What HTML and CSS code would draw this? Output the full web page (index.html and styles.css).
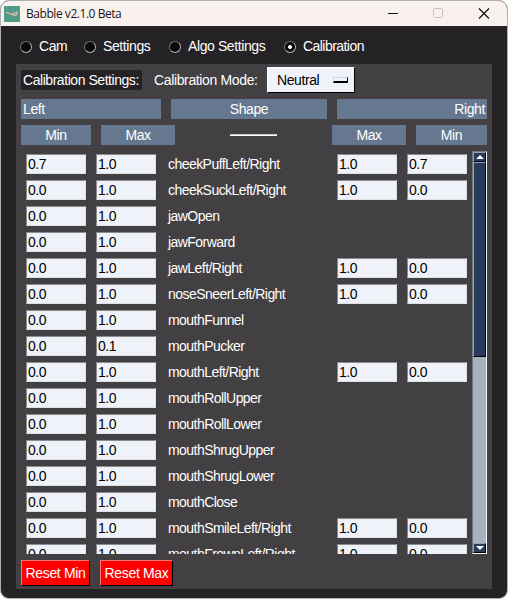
FILE: index.html
```
<!DOCTYPE html>
<html lang="en">
<head>
<meta charset="utf-8">
<title>Babble v2.1.0 Beta</title>
<link rel="stylesheet" href="styles.css">
</head>
<body>
<div class="window">
  <header class="titlebar">
    <svg class="logo" width="16" height="16" viewBox="0 0 16 16"><rect width="16" height="16" fill="#4f9d88"/><path d="M2 6.7Q4 6.3 5.5 7.5T9 7.6L13.2 6.5" fill="none" stroke="#e3b5a0" stroke-width="1.2"/><path d="M8 8.2Q10 9.8 12 9.2Q13.2 8.5 13 5.5" fill="none" stroke="#e8c0b3" stroke-width="1.1"/></svg>
    <span class="title">Babble v2.1.0 Beta</span>
    <svg class="controls" width="104" height="14" viewBox="0 0 104 14" fill="none"><path d="M0 6.5H10" stroke="#111"/><rect x="45.5" y="1.5" width="9" height="9" rx="1" stroke="#c8c1bf"/><path d="M91 1.5L101 11.5M101 1.5L91 11.5" stroke="#111" stroke-width="1.2"/></svg>
  </header>
  <nav class="tabs">
    <label class="tab cam"><i class="radio"></i><span>Cam</span></label>
    <label class="tab settings"><i class="radio"></i><span>Settings</span></label>
    <label class="tab algo"><i class="radio"></i><span>Algo Settings</span></label>
    <label class="tab current"><i class="radio on"></i><span>Calibration</span></label>
  </nav>
  <main class="panel">
    <div class="mode">
      <span class="caption">Calibration Settings:</span>
      <span class="mode-label">Calibration Mode:</span>
      <div class="select"><span>Neutral</span><i class="indicator"></i></div>
    </div>
    <div class="groups"><div class="head left">Left</div><div class="head">Shape</div><div class="head right">Right</div></div>
    <div class="columns"><div class="head shifted">Min</div><div class="head">Max</div><i class="rule"></i><div class="head">Max</div><div class="head">Min</div></div>
    <div class="viewport">
      <div class="rows" id="rows"></div>
      <div class="scrollbar">
        <div class="arrow"><svg width="8" height="4" viewBox="0 0 8 4"><path d="M0 4L4 0L8 4Z" fill="#fff"/></svg></div>
        <div class="thumb"></div>
        <div class="trough"></div>
        <div class="arrow"><svg width="8" height="4" viewBox="0 0 8 4"><path d="M0 0H8L4 4Z" fill="#fff"/></svg></div>
      </div>
    </div>
    <footer class="actions"><button class="reset min">Reset Min</button><button class="reset">Reset Max</button></footer>
  </main>
</div>
<script src="rows.js"></script>
</body>
</html>
```
FILE: styles.css
```
* { box-sizing: border-box; }
body { margin: 0; background: #fff; overflow: hidden; font: 14px/18px "Liberation Sans", Arial, sans-serif; color: #fff; }
i { display: block; flex: none; }
.window { width: 508px; height: 599px; border: 1px solid #b3aeae; border-radius: 9px; overflow: hidden; background: #242224; display: flex; flex-direction: column; }
.titlebar { height: 25px; flex: none; background: #f9f1ee; color: #1b1919; display: flex; align-items: center; padding: 0 18px 0 3px; }
.logo { flex: none; }
.title { margin-left: 6px; font: 12px/16px "Open Sans", "Noto Sans", sans-serif; letter-spacing: -.45px; white-space: nowrap; }
.controls { margin-left: auto; margin-right: -3px; }
.tabs { height: 38px; flex: none; display: flex; align-items: center; padding: 3px 0 0 19px; white-space: nowrap; letter-spacing: -.4px; }
.tab { display: flex; align-items: center; gap: 7px; }
.tab span { padding-bottom: 2px; }
.cam { width: 64px; }
.settings { width: 85px; }
.algo { width: 115px; }
.current { letter-spacing: -.55px; }
.radio { width: 12px; height: 12px; border-radius: 50%; border: 1px solid; border-color: #777 #b4b4b4 #b4b4b4 #777; background: #080808; }
.on { background: radial-gradient(circle, #fff 0 1.7px, #080808 2.2px); }
.panel { margin: 0 15px 0 15px; height: 525px; flex: none; background: #434043; padding: 3px 5px; }
.mode { height: 26px; display: flex; align-items: center; white-space: nowrap; letter-spacing: -.4px; }
.caption { width: 121px; height: 20px; line-height: 21px; padding-left: 2px; background: #242224; margin-right: 12px; letter-spacing: -.45px; }
.mode-label { width: 113px; letter-spacing: -.36px; }
.select { width: 88px; height: 26px; background: #eff3f9; color: #000; border: 1px solid; border-color: #f8fbff #000 #000 #f8fbff; display: flex; align-items: center; justify-content: space-between; padding: 0 6px 0 9px; line-height: 20px; }
.select span { padding-bottom: 1px; }
.indicator { width: 15px; height: 6px; background: #eff3f9; border: 1px solid; border-color: #d5d9df #000 #000 #d5d9df; border-bottom-width: 2px; }
.head { background: #66788f; height: 20px; line-height: 21px; text-align: center; padding: 0 2px; letter-spacing: -.4px; }
.groups { display: grid; grid-template-columns: 140px 156px 150px; gap: 10px; margin-top: 6px; }
.left { text-align: left; }
.right { text-align: right; }
.columns { display: grid; grid-template-columns: 70px 74px 137px 74px 71px; column-gap: 10px; margin-top: 6px; align-items: center; }
.rule { width: 47px; height: 2px; background: #fff; border-top: 1px solid #ccc; justify-self: center; }
.viewport { height: 403px; margin-top: 6px; display: flex; justify-content: space-between; overflow: hidden; }
.rows { padding: 3px 0 0 5px; }
.row { display: grid; grid-template-columns: 60px 60px 161px 60px 60px; column-gap: 10px; height: 26px; align-items: start; }
.shape { padding-left: 2px; line-height: 21px; white-space: nowrap; letter-spacing: -.55px; }
.value { height: 20px; border: 1px solid; border-color: #8b8b8b #dce1e6 #dce1e6 #8b8b8b; background: #eff3f9; color: #000; line-height: 19px; padding-left: 1px; letter-spacing: -.5px; }
.scrollbar { width: 15px; height: 403px; display: flex; flex-direction: column; background: #a6b2be; border: 1px solid; border-color: #70777f #f0f5f8 #f0f5f8 #70777f; }
.arrow { height: 10px; flex: none; background: #283b5b; border: 1px solid; border-color: #94a1b4 #000 #000 #94a1b4; display: flex; justify-content: center; align-items: center; }
.thumb { height: 195px; flex: none; background: #283b5b; border: 1px solid; border-color: #94a1b4 #000 #000 #94a1b4; }
.trough { flex: 1; }
.actions { display: flex; gap: 10px; margin-top: 6px; }
.reset { font: inherit; color: #fff; background: #f00; width: 73px; height: 26px; padding: 0 0 1px; border: 1px solid; border-color: #ff7777 #000 #000 #ff7777; white-space: nowrap; letter-spacing: -.35px; }
.min { width: 69px; }
```
FILE: rows.js
```
const rows = [
  ["cheekPuffLeft/Right", "0.7", "1.0", "0.7"],
  ["cheekSuckLeft/Right", "0.0", "1.0", "0.0"],
  ["jawOpen", "0.0", "1.0"],
  ["jawForward", "0.0", "1.0"],
  ["jawLeft/Right", "0.0", "1.0", "0.0"],
  ["noseSneerLeft/Right", "0.0", "1.0", "0.0"],
  ["mouthFunnel", "0.0", "1.0"],
  ["mouthPucker", "0.0", "0.1"],
  ["mouthLeft/Right", "0.0", "1.0", "0.0"],
  ["mouthRollUpper", "0.0", "1.0"],
  ["mouthRollLower", "0.0", "1.0"],
  ["mouthShrugUpper", "0.0", "1.0"],
  ["mouthShrugLower", "0.0", "1.0"],
  ["mouthClose", "0.0", "1.0"],
  ["mouthSmileLeft/Right", "0.0", "1.0", "0.0"],
  ["mouthFrownLeft/Right", "0.0", "1.0", "0.0"]
];
const value = text => `<div class="value">${text}</div>`;
document.getElementById("rows").innerHTML = rows.map(([name, min, max, right]) =>
  `<div class="row">${value(min)}${value(max)}<div class="shape">${name}</div>${right ? value("1.0") + value(right) : ""}</div>`
).join("");
```
